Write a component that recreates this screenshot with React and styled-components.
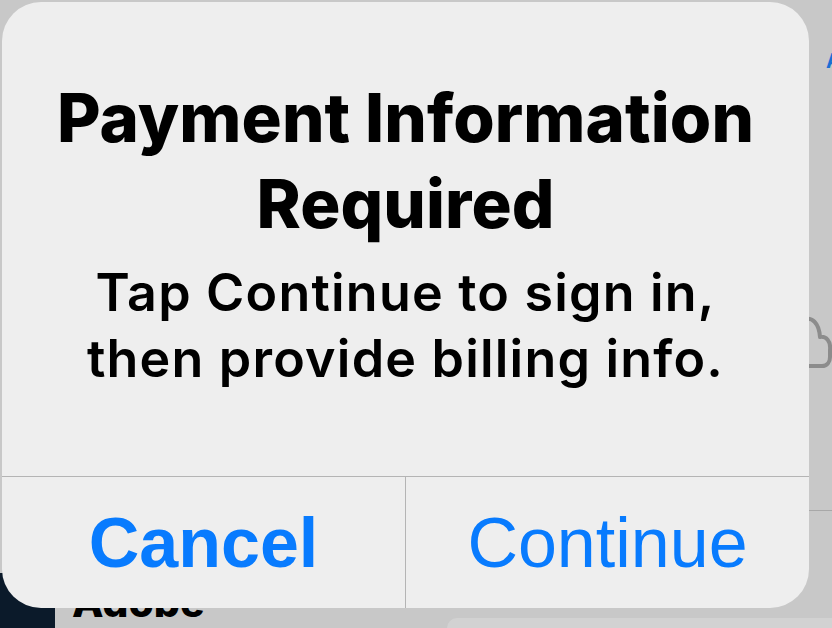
import React from "react";
import styled, { createGlobalStyle } from "styled-components";

const GlobalStyle = createGlobalStyle`
  html, body { margin: 0; padding: 0; background: #c8c8c8; }
  body { font-family: Inter, "Noto Sans", sans-serif; }
`;

const Screen = styled.div`
  position: relative;
  width: 832px;
  height: 628px;
  overflow: hidden;
  background: #c8c8c8;
`;

/* ---------- underlying page (mostly hidden by the alert) ---------- */
const Backdrop = styled.div`
  display: flex;
  flex-direction: column;
  height: 100%;
`;

const Upper = styled.div`
  flex: 1;
  display: flex;
  justify-content: flex-end;
`;

const Rail = styled.div`
  width: 23px;
  display: flex;
  flex-direction: column;
`;

const LinkGlyph = styled.span`
  margin-top: 51px;
  padding-left: 17px;
  font-family: Inter, sans-serif;
  font-weight: 700;
  font-size: 20px;
  line-height: 20px;
  color: #1b6fd3;
  white-space: nowrap;
`;

const CloudSvg = styled.svg`
  display: block;
  margin-top: 239px;
  overflow: visible;
`;

const RailDivider = styled.div`
  margin-top: 140px;
  height: 1px;
  background: #a8a8a8;
`;

const Lower = styled.div`
  height: 55px;
  display: flex;
`;

const DarkPanel = styled.div`
  width: 55px;
  background: #0b1a2a;
`;

const SectionTitle = styled.div`
  margin-top: 9px;
  padding-left: 17px;
  font-family: Inter, sans-serif;
  font-weight: 800;
  font-size: 41px;
  line-height: 41px;
  color: #000;
`;

const LightTile = styled.div`
  margin-left: auto;
  align-self: flex-end;
  width: 385px;
  height: 10px;
  background: #d2d2d2;
  border-top-left-radius: 14px;
`;

/* ---------- alert ---------- */
const Alert = styled.div`
  position: absolute;
  left: 2px;
  top: 2px;
  width: 807px;
  height: 606px;
  border-radius: 39px;
  background: #eeeeee;
  display: flex;
  flex-direction: column;
  overflow: hidden;
`;

const Body = styled.div`
  height: 474px;
  box-sizing: border-box;
  padding: 73px 20px 0;
  display: flex;
  flex-direction: column;
  align-items: center;
  text-align: center;
  color: #000;
`;

const Title = styled.h1`
  margin: 0;
  font-family: Inter, sans-serif;
  font-weight: 800;
  font-size: 67px;
  line-height: 86px;
  letter-spacing: 0.1px;
  white-space: nowrap;
`;

const Message = styled.p`
  margin: 13px 0 0;
  font-family: Inter, sans-serif;
  font-weight: 600;
  font-size: 52px;
  line-height: 66px;
  letter-spacing: 1.2px;
  white-space: nowrap;
`;

const Actions = styled.div`
  height: 131px;
  border-top: 1px solid #b4b4b4;
  display: flex;
`;

const ActionButton = styled.button`
  flex: 1;
  border: none;
  background: transparent;
  padding: 0;
  margin: 0;
  display: flex;
  align-items: center;
  justify-content: center;
  font-family: "Liberation Sans", Arial, sans-serif;
  font-size: 70px;
  font-weight: ${(p) => (p.$primary ? 700 : 400)};
  color: #087bfe;
  cursor: pointer;
  & + & {
    border-left: 1px solid #b4b4b4;
  }
`;

export default function App() {
  return (
    <>
      <GlobalStyle />
      <Screen>
        <Backdrop>
          <Upper>
            <Rail>
              <LinkGlyph>A</LinkGlyph>
              <CloudSvg width="23" height="60" viewBox="0 0 23 60">
                <path
                  d="M-6 10 C 3 6, 10 13, 11 27 C 17 26, 22 31, 21 40 L 21 47 C 21 52, 18 56, 13 56 L -6 56"
                  fill="none"
                  stroke="#8c8c8c"
                  strokeWidth="4"
                  strokeLinecap="round"
                  strokeLinejoin="round"
                />
              </CloudSvg>
              <RailDivider />
            </Rail>
          </Upper>
          <Lower>
            <DarkPanel />
            <SectionTitle>Adobe</SectionTitle>
            <LightTile />
          </Lower>
        </Backdrop>

        <Alert role="alertdialog">
          <Body>
            <Title>
              Payment Information
              <br />
              Required
            </Title>
            <Message>
              Tap Continue to sign in,
              <br />
              then provide billing info.
            </Message>
          </Body>
          <Actions>
            <ActionButton $primary>Cancel</ActionButton>
            <ActionButton>Continue</ActionButton>
          </Actions>
        </Alert>
      </Screen>
    </>
  );
}
